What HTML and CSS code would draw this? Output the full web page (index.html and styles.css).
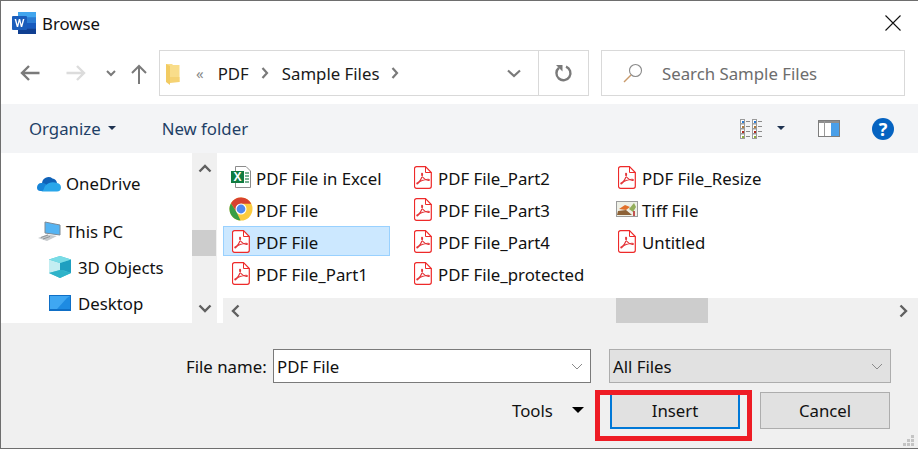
FILE: index.html
```html
<!DOCTYPE html>
<html lang="en">
<head>
<meta charset="utf-8">
<title>Browse</title>
<link rel="stylesheet" href="styles.css">
</head>
<body>
<svg class="defs" width="0" height="0" aria-hidden="true">
  <symbol id="pdf" viewBox="0 0 18 23">
    <path d="M2.5 .7H11.5L17.3 6.5V20.3a2 2 0 0 1-2 2H2.5a2 2 0 0 1-2-2V2.7a2 2 0 0 1 2-2Z" fill="#fff" stroke="#ee2a2a" stroke-width="1.2"/>
    <path d="M11.5 .7V6.5H17.3" fill="none" stroke="#ee2a2a" stroke-width="1"/>
    <path d="M3 17C5 16.500 7.500 12.500 8.500 9C8.900 7.500 8 6.700 7.600 7.800C7 9.500 10 14 14.500 14.500C15.800 14.600 15.600 13.100 14 13.200C11 13.400 6 15 4.200 17.200C3.200 18.500 2.400 17.500 3 17Z" fill="none" stroke="#e4363a" stroke-width="1.100"/>
  </symbol>
</svg>

<main class="window">
  <header class="titlebar">
    <svg class="word" width="24" height="22" viewBox="0 0 24 22" aria-hidden="true">
      <rect x="6" y="0" width="18" height="22" rx="1" fill="#2b7cd3"/>
      <rect x="6" y="0" width="18" height="5.500" fill="#41a5ee"/>
      <rect x="6" y="5.500" width="18" height="5.500" fill="#2b7cd3"/>
      <rect x="6" y="11" width="18" height="5.500" fill="#185abd"/>
      <rect x="6" y="16.500" width="18" height="5.500" fill="#103f91"/>
      <rect x="0" y="4" width="15" height="14" rx="1" fill="#1a5dbb"/>
      <path d="M2.600 7 4.800 15H6.200L7.500 9.700 8.800 15H10.200L12.400 7H10.900L9.500 12.500 8.200 7H6.800L5.500 12.500 4.100 7Z" fill="#fff"/>
    </svg>
    <h1 class="title">Browse</h1>
    <svg class="close" width="16" height="16" viewBox="0 0 16 16" aria-hidden="true"><path d="M.5 .5 15.500 15.500M15.500 .5 .5 15.500" stroke="#111" stroke-width="1.100" fill="none"/></svg>
  </header>

  <nav class="navrow">
    <svg class="back" width="20" height="16" viewBox="0 0 20 16" aria-hidden="true"><path d="M19.500 8H2M9 1 2 8l7 7" fill="none" stroke="#7a7a7a" stroke-width="2.400"/></svg>
    <svg class="forward" width="20" height="16" viewBox="0 0 20 16" aria-hidden="true"><path d="M.5 8H18M11 1l7 7-7 7" fill="none" stroke="#dcdcdc" stroke-width="2.400"/></svg>
    <svg class="history" width="10" height="7" viewBox="0 0 10 7" aria-hidden="true"><path d="M1 1 5 5 9 1" fill="none" stroke="#7a7a7a" stroke-width="2"/></svg>
    <svg class="up" width="16" height="20" viewBox="0 0 16 20" aria-hidden="true"><path d="M8 20V2M1 9l7-7 7 7" fill="none" stroke="#7a7a7a" stroke-width="2"/></svg>
    <div class="address">
      <svg class="folder" width="14" height="21" viewBox="0 0 14 21" aria-hidden="true">
        <path d="M0 0H6L7 1H13.500V18H0Z" fill="#f9dd8a"/>
        <path d="M0 0 4 2V21L0 18Z" fill="#f2cb62"/>
        <path d="M4 13H13.500V18L4 19Z" fill="#f5d273"/>
      </svg>
      <span class="chev-double">«</span>
      <span class="crumb">PDF</span>
      <svg class="sep" width="8" height="12" viewBox="0 0 8 12" aria-hidden="true"><path d="M1.500 1 6 6 1.500 11" fill="none" stroke="#7a7a7a" stroke-width="2.200"/></svg>
      <span class="crumb">Sample Files</span>
      <svg class="sep" width="8" height="12" viewBox="0 0 8 12" aria-hidden="true"><path d="M1.500 1 6 6 1.500 11" fill="none" stroke="#7a7a7a" stroke-width="2.200"/></svg>
      <svg class="addr-drop" width="14" height="9" viewBox="0 0 14 9" aria-hidden="true"><path d="M1 1.500 7 7l6-5.500" fill="none" stroke="#7a7a7a" stroke-width="2.200"/></svg>
      <div class="refresh">
        <svg width="18" height="18" viewBox="0 0 18 18" aria-hidden="true"><path d="M4 3.800A7 7 0 1 0 11 2.700" fill="none" stroke="#7a7a7a" stroke-width="2.400"/><path d="M1 1H7.500V7.500Z" fill="#7a7a7a"/></svg>
      </div>
    </div>
    <div class="search">
      <svg width="20" height="20" viewBox="0 0 20 20" aria-hidden="true"><circle cx="12.500" cy="7.500" r="6" fill="none" stroke="#8a8a8a" stroke-width="1.100"/><path d="M8 12 1 19" stroke="#c99a6b" stroke-width="1.400" fill="none"/></svg>
      <span class="search-text">Search Sample Files</span>
    </div>
  </nav>

  <div class="toolbar">
    <span class="tool organize">Organize</span>
    <span class="caret dark"></span>
    <span class="tool newfolder">New folder</span>
    <svg class="views" width="23" height="20" viewBox="0 0 23 20" aria-hidden="true">
      <g fill="#fff" stroke="#9a9a9a" stroke-width="1">
        <rect x=".5" y=".5" width="4" height="4.250"/><rect x=".5" y="5" width="4" height="4.500"/><rect x=".5" y="10" width="4" height="4.500"/><rect x=".5" y="15" width="4" height="4.500"/>
        <rect x="12.500" y=".5" width="4" height="4.250"/><rect x="12.500" y="5" width="4" height="4.500"/><rect x="12.500" y="10" width="4" height="4.500"/><rect x="12.500" y="15" width="4" height="4.500"/>
      </g>
      <path d="M2 2h2v2H2zM14 2h2v2h-2z" fill="#2b7cd3"/><path d="M2 7h2v2H2zM14 7h2v2h-2z" fill="#b07a3a"/><path d="M2 12h2v2H2zM14 12h2v2h-2z" fill="#b02a20"/><path d="M2 17h2v2H2zM14 17h2v2h-2z" fill="#8fae3a"/>
      <path d="M6 2.500h4M6 7.500h4M6 12.500h4M6 17.500h4M18 2.500h4M18 7.500h4M18 12.500h4M18 17.500h4" stroke="#8a8a8a" fill="none"/>
    </svg>
    <span class="caret dark views-caret"></span>
    <svg class="preview" width="22" height="17" viewBox="0 0 22 17" aria-hidden="true">
      <rect x=".5" y=".5" width="21" height="16" fill="#fff" stroke="#7d7d7d"/>
      <rect x="1" y="1" width="20" height="2" fill="#8f8f8f"/>
      <path d="M6.500 1v15" stroke="#9a9a9a" fill="none"/>
      <rect x="13" y="3" width="8" height="13" fill="#4a9fe8"/>
    </svg>
    <span class="help">?</span>
  </div>

  <section class="browser">
    <div class="tree">
      <div class="tree-pane">
        <div class="tree-item onedrive">
          <svg width="24" height="17" viewBox="0 0 24 17" aria-hidden="true">
            <path d="M5 8.500A6.500 6.500 0 0 1 15.500 3.500 5.500 5.500 0 0 1 20 8L14 12Z" fill="#0f62b8"/>
            <path d="M0 12.500C0 9.500 2.500 7.500 5 8C8 8 10 9.500 14 16H3.500C1 16 0 14.500 0 12.500Z" fill="#1684d8"/>
            <path d="M8.500 10.500C12 7 16 6.500 20 8C22.500 8.300 24 10 24 12.500C24 15 22.500 16.500 20 16.500H4C7 16.500 7 12 8.500 10.500Z" fill="#29a6ea"/>
          </svg>
          <span>OneDrive</span>
        </div>
        <div class="tree-item thispc">
          <svg width="24" height="21" viewBox="0 0 24 21" aria-hidden="true">
            <path d="M8 1 23 4V14L8 12Z" fill="#55b4f3" stroke="#7f8a94"/>
            <path d="M1 17 10 13.500 20 15 10 20Z" fill="#c6cacd"/>
            <path d="M4 16.500 11 14M6 18 13 15.500" stroke="#8f9498" fill="none"/>
          </svg>
          <span>This PC</span>
        </div>
        <div class="tree-item sub objects">
          <svg width="22" height="22" viewBox="0 0 22 22" aria-hidden="true">
            <path d="M11 0 22 3.500V17L11 22 0 17V3.500Z" fill="#47c6d7"/>
            <path d="M0 3.500 11 7V14L0 17Z" fill="#c4eef2"/>
            <path d="M11 7 22 3.500V17L15 14.500H11Z" fill="#1f9fc0"/>
            <path d="M0 17 11 14 22 17 11 22Z" fill="#2fb3c9"/>
            <path d="M11 0 22 3.500 11 7 0 3.500Z" fill="#7adce6"/>
          </svg>
          <span>3D Objects</span>
        </div>
        <div class="tree-item sub desktop">
          <svg width="22" height="16" viewBox="0 0 22 16" aria-hidden="true">
            <rect width="22" height="16" fill="#0f6fc6"/>
            <rect x="1" y="1" width="20" height="13" fill="#3fa7f2"/>
            <path d="M8 14 18 3 21 1V14Z" fill="#1e8be2"/>
          </svg>
          <span>Desktop</span>
        </div>
      </div>
      <div class="vscroll">
        <svg width="14" height="9" viewBox="0 0 14 9" aria-hidden="true"><path d="M1.500 7.500 7 2l5.500 5.500" fill="none" stroke="#606060" stroke-width="2.400"/></svg>
        <div class="vthumb"></div>
        <svg width="14" height="9" viewBox="0 0 14 9" aria-hidden="true"><path d="M1.500 1.500 7 7l5.500-5.500" fill="none" stroke="#606060" stroke-width="2.400"/></svg>
      </div>
    </div>
    <div class="files">
      <ul class="file-grid">
        <li class="file">
          <span class="slot"><svg width="20" height="22" viewBox="0 0 20 22" aria-hidden="true">
            <path d="M4.500 .5H15L19.500 5V21.500H4.500Z" fill="#fff" stroke="#8c8c8c"/>
            <path d="M14 7h4M14 10h4M14 13h4M14 16h4" stroke="#4f9a72" stroke-width="1.400" fill="none"/>
            <rect x="0" y="5" width="13" height="12" fill="#107c41"/>
            <text class="xl" x="6.500" y="15">X</text>
          </svg></span>
          <span class="fname">PDF File in Excel</span>
        </li>
        <li class="file">
          <span class="slot"><svg width="24" height="24" viewBox="0 0 24 24" aria-hidden="true">
            <circle cx="12" cy="12" r="11.500" fill="#fbcb3f"/>
            <path d="M2 6.200 7.300 14.500 11.500 23.500A11.500 11.500 0 0 1 2 6.200Z" fill="#389e45"/>
            <path d="M2 6.200A11.500 11.500 0 0 1 22.300 6.800H12L7.300 14.500Z" fill="#d8412f"/>
            <circle cx="12" cy="12" r="5.500" fill="#fff"/>
            <circle cx="12" cy="12" r="4.400" fill="#5088ee"/>
          </svg></span>
          <span class="fname">PDF File</span>
        </li>
        <li class="file selected">
          <span class="slot"><svg width="18" height="23" aria-hidden="true"><use href="#pdf"/></svg></span>
          <span class="fname">PDF File</span>
        </li>
        <li class="file">
          <span class="slot"><svg width="18" height="23" aria-hidden="true"><use href="#pdf"/></svg></span>
          <span class="fname">PDF File_Part1</span>
        </li>
        <li class="file wide">
          <span class="slot"><svg width="18" height="23" aria-hidden="true"><use href="#pdf"/></svg></span>
          <span class="fname">PDF File_Part2</span>
        </li>
        <li class="file wide">
          <span class="slot"><svg width="18" height="23" aria-hidden="true"><use href="#pdf"/></svg></span>
          <span class="fname">PDF File_Part3</span>
        </li>
        <li class="file wide">
          <span class="slot"><svg width="18" height="23" aria-hidden="true"><use href="#pdf"/></svg></span>
          <span class="fname">PDF File_Part4</span>
        </li>
        <li class="file wide">
          <span class="slot"><svg width="18" height="23" aria-hidden="true"><use href="#pdf"/></svg></span>
          <span class="fname">PDF File_protected</span>
        </li>
        <li class="file wide">
          <span class="slot"><svg width="18" height="23" aria-hidden="true"><use href="#pdf"/></svg></span>
          <span class="fname">PDF File_Resize</span>
        </li>
        <li class="file wide">
          <span class="slot"><svg width="22" height="16" viewBox="0 0 22 16" aria-hidden="true">
            <rect x=".5" y=".5" width="21" height="15" fill="#eef0e6" stroke="#9c9c9c"/>
            <path d="M3 8 9 4 14 6 10 9Z" fill="#e0702a"/>
            <path d="M13 8 18 2 20 6 17 11Z" fill="#93ad5a"/>
            <path d="M1 14 2 10 10 9 16 14Z" fill="#8d6238"/>
            <path d="M18 10V15" stroke="#b32020" stroke-width="1.500" fill="none"/>
          </svg></span>
          <span class="fname">Tiff File</span>
        </li>
        <li class="file wide">
          <span class="slot"><svg width="18" height="23" aria-hidden="true"><use href="#pdf"/></svg></span>
          <span class="fname">Untitled</span>
        </li>
      </ul>
      <div class="hscroll">
        <svg width="9" height="14" viewBox="0 0 9 14" aria-hidden="true"><path d="M7.500 1.500 2 7l5.500 5.500" fill="none" stroke="#606060" stroke-width="2.400"/></svg>
        <div class="htrack"><div class="hthumb"></div></div>
        <svg width="9" height="14" viewBox="0 0 9 14" aria-hidden="true"><path d="M1.500 1.500 7 7l-5.500 5.500" fill="none" stroke="#606060" stroke-width="2.400"/></svg>
      </div>
    </div>
  </section>

  <footer class="footer">
    <div class="name-row">
      <span class="label">File name:</span>
      <div class="combo name">
        <span>PDF File</span>
        <svg width="12" height="7" viewBox="0 0 12 7" aria-hidden="true"><path d="M1 1 6 6l5-5" fill="none" stroke="#8a8a8a"/></svg>
      </div>
      <div class="combo type">
        <span>All Files</span>
        <svg width="12" height="7" viewBox="0 0 12 7" aria-hidden="true"><path d="M1 1 6 6l5-5" fill="none" stroke="#8a8a8a"/></svg>
      </div>
    </div>
    <div class="action-row">
      <span class="tools">Tools</span>
      <span class="caret black"></span>
      <div class="highlight"><button class="btn insert" type="button">Insert</button></div>
      <button class="btn cancel" type="button">Cancel</button>
    </div>
    <svg class="grip" width="11" height="11" viewBox="0 0 11 11" aria-hidden="true"><path d="M8 0h3v3H8zM4 4h3v3H4zM8 4h3v3H8zM0 8h3v3H0zM4 8h3v3H4zM8 8h3v3H8z" fill="#c4c4c4"/></svg>
  </footer>
</main>
</body>
</html>
```

FILE: styles.css
```css
* { box-sizing: border-box; }
html, body { margin: 0; padding: 0; background: #fff; }
body { width: 918px; height: 449px; overflow: hidden; font-family: "Noto Sans", "Open Sans", "Liberation Sans", sans-serif; font-size: 16.8px; color: #111; }
.defs { display: block; height: 0; }

.window { width: 918px; height: 449px; border-top: 1px solid #6e6e6e; border-left: 1px solid #6e6e6e; border-bottom: 1px solid #6e6e6e; display: flex; flex-direction: column; background: #fff; }

.titlebar { height: 49px; display: flex; align-items: center; padding: 0 0 0 11px; }
.titlebar .word { flex: none; margin-top: -6px; }
.title { font-size: 16.8px; font-weight: 400; margin: 0 0 0 6px; flex: 1; position: relative; top: -2px; }
.close { margin-right: 17px; margin-top: -5px; }

.navrow { height: 46px; display: flex; align-items: center; }
.back { margin-left: 19px; }
.forward { margin-left: 26px; }
.history { margin-left: 20px; }
.up { margin-left: 15px; margin-right: 12px; margin-top: 1px; }
.address { width: 430px; height: 46px; border: 1px solid #d9d9d9; display: flex; align-items: center; padding-left: 6px; }
.folder { flex: none; margin-top: 3px; }
.chev-double { color: #8a8a8a; font-size: 15px; margin-left: 16px; margin-right: 14px; }
.crumb { color: #1a1a1a; }
.sep { margin: 0 13px 0 12px; flex: none; }
.addr-drop { margin-left: auto; margin-right: 17px; }
.refresh { width: 50px; height: 44px; border-left: 1px solid #d9d9d9; display: flex; align-items: center; justify-content: center; }
.search { width: 304px; height: 46px; margin-left: 12px; border: 1px solid #d9d9d9; display: flex; align-items: center; padding-left: 21px; }
.search-text { margin-left: 19px; color: #6d6d6d; }

.toolbar { height: 49px; margin-top: 8px; background: #f3f4f6; display: flex; align-items: center; color: #1e3f66; }
.tool { color: #1e3f66; }
.organize { margin-left: 28px; }
.caret { width: 0; height: 0; border-left: 4px solid transparent; border-right: 4px solid transparent; border-top: 4px solid #1e3250; }
.toolbar > .caret { margin-left: 7px; margin-top: -2px; }
.newfolder { margin-left: 46px; }
.views { margin-left: auto; }
.toolbar > .views-caret { margin-left: 14px; }
.preview { margin-left: 33px; }
.help { margin-left: 32px; margin-right: 24px; width: 22px; height: 22px; border-radius: 50%; background: #0563c1; color: #fff; font-weight: 700; font-size: 18px; line-height: 22px; display: flex; align-items: center; justify-content: center; }

.browser { height: 170px; display: flex; background: #fff; }
.tree { width: 216px; display: flex; flex: none; background: #fff; }
.tree-pane { width: 191px; padding-top: 14px; }
.tree-item { display: flex; align-items: center; gap: 5px; height: 36px; padding-left: 36px; }
.tree-item svg { flex: none; }
.tree-item.onedrive { height: 32px; margin-bottom: 16px; }
.tree-item.thispc { height: 32px; }
.tree-item.sub { padding-left: 48px; gap: 7px; }
.tree-item.objects { margin-top: 2px; }
.vscroll { width: 25px; background: #f0f0f0; display: flex; flex-direction: column; align-items: center; justify-content: space-between; padding: 11px 0 10px; position: relative; }
.vthumb { position: absolute; left: 0; top: 77px; width: 24px; height: 26px; background: #cdcdcd; }

.files { width: 695px; margin-left: 6px; display: flex; flex-direction: column; background: #fff; }
.file-grid { list-style: none; margin: 0; padding: 9px 0 0; height: 145px; display: grid; grid-auto-flow: column; grid-template-rows: repeat(4, 30px); row-gap: 2px; grid-template-columns: 182px 204px 200px; }
.file { display: flex; align-items: center; padding-left: 5px; border: 1px solid transparent; width: 167px; white-space: nowrap; }
.file.wide { width: auto; }
.file.selected { background: #cce8ff; border-color: #99d1ff; }
.slot { flex: none; width: 24px; margin-right: 3px; display: flex; align-items: center; justify-content: center; }
.fname { padding-top: 2px; }
.xl { font-family: "Liberation Sans", sans-serif; font-size: 12px; font-weight: 700; fill: #fff; text-anchor: middle; }
.hscroll { height: 25px; background: #f0f0f0; display: flex; align-items: center; padding: 0 10px 0 8px; }
.htrack { flex: 1; height: 25px; position: relative; }
.hthumb { position: absolute; left: 376px; top: 0; width: 92px; height: 25px; background: #cdcdcd; }

.footer { flex: 1; background: #f0f0f0; display: flex; flex-direction: column; position: relative; }
.name-row { display: flex; align-items: center; padding: 26px 0 0 185px; }
.label { width: 87px; }
.combo { height: 34px; display: flex; align-items: center; justify-content: space-between; padding: 1px 7px 0 3px; }
.combo.name { width: 318px; background: #fff; border: 1px solid #7a7a7a; }
.combo.type { width: 282px; margin-left: 18px; background: #e1e1e1; border: 1px solid #adadad; }
.action-row { display: flex; align-items: flex-start; margin-top: 7px; padding-left: 511px; }
.tools { width: 60px; height: 37px; margin-top: 2px; display: flex; align-items: center; }
.caret.black { border-left-width: 6px; border-right-width: 6px; border-top: 6px solid #000; margin-top: 17px; margin-right: 11px; }
.highlight { width: 157px; height: 51px; border: 5px solid #ee1c25; display: flex; align-items: flex-start; padding-left: 10px; }
.btn { font: inherit; color: #111; background: #e1e1e1; padding: 0; }
.insert { width: 130px; height: 34px; padding-bottom: 2px; border: 2px solid #0078d7; border-top: 0; }
.cancel { width: 130px; height: 37px; border: 1px solid #adadad; margin-left: 8px; margin-top: 2px; }
.grip { position: absolute; right: 4px; bottom: 2px; }
```
